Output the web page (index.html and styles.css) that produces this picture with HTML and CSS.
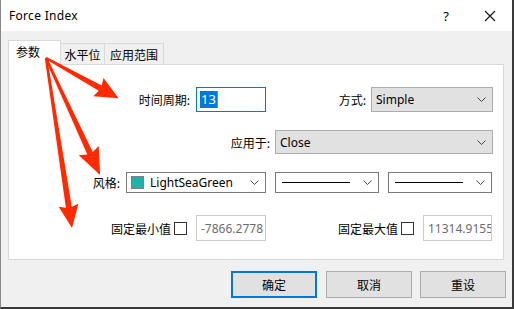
FILE: index.html
```html
<!DOCTYPE html>
<html>
<head>
<meta charset="utf-8">
<link rel="stylesheet" href="styles.css">
</head>
<body>
<div class="window">
  <div class="titlebar">
    <span class="title">Force Index</span>
    <span class="help">?</span>
    <svg class="close" width="12" height="12" viewBox="0 0 12 12"><path d="M1 1L11 11M11 1L1 11" stroke="#111" stroke-width="1.1" fill="none"/></svg>
  </div>
  <div class="content">
    <div class="tabs">
      <div class="tab active">参数</div>
      <div class="tab">水平位</div>
      <div class="tab">应用范围</div>
    </div>
    <div class="panel">
      <div class="row r1">
        <div class="cell">
          <span class="label">时间周期:</span>
          <div class="input focus"><span class="sel">13</span></div>
        </div>
        <div class="cell">
          <span class="label">方式:</span>
          <div class="select gray w122"><span>Simple</span><svg class="chev" width="9" height="5" viewBox="0 0 9 5"><path d="M0.5 0.5L4.5 4.5L8.5 0.5" stroke="#444" fill="none"/></svg></div>
        </div>
      </div>
      <div class="row r2">
        <div class="cell span">
          <span class="label">应用于:</span>
          <div class="select gray w218"><span>Close</span><svg class="chev" width="9" height="5" viewBox="0 0 9 5"><path d="M0.5 0.5L4.5 4.5L8.5 0.5" stroke="#444" fill="none"/></svg></div>
        </div>
      </div>
      <div class="row r3">
        <div class="cell">
          <span class="label">风格:</span>
          <div class="select white w140"><span class="swatch"></span><span>LightSeaGreen</span><svg class="chev" width="9" height="5" viewBox="0 0 9 5"><path d="M0.5 0.5L4.5 4.5L8.5 0.5" stroke="#444" fill="none"/></svg></div>
        </div>
        <div class="cell start">
          <div class="select white w104"><span class="line"></span><svg class="chev" width="9" height="5" viewBox="0 0 9 5"><path d="M0.5 0.5L4.5 4.5L8.5 0.5" stroke="#444" fill="none"/></svg></div>
          <div class="select white w104"><span class="line"></span><svg class="chev" width="9" height="5" viewBox="0 0 9 5"><path d="M0.5 0.5L4.5 4.5L8.5 0.5" stroke="#444" fill="none"/></svg></div>
        </div>
      </div>
      <div class="row r4">
        <div class="cell">
          <span class="label">固定最小值</span>
          <span class="check"></span>
          <div class="input disabled w70">-7866.2778</div>
        </div>
        <div class="cell">
          <span class="label">固定最大值</span>
          <span class="check"></span>
          <div class="input disabled w69">11314.9155</div>
        </div>
      </div>
    </div>
    <div class="buttons">
      <div class="btn default">确定</div>
      <div class="btn b2">取消</div>
      <div class="btn b3">重设</div>
    </div>
  </div>
  <svg class="arrows" width="514" height="309" viewBox="0 0 514 309">
    <g fill="#ff2a00">
      <polygon transform="translate(46 58) rotate(29.05)" points="0,-1.2 62,-3 60,-10.5 83,0 60,10.5 62,3 0,1.2"/>
      <polygon transform="translate(46 58) rotate(65.2)" points="0,-1.2 105,-3 102,-11 129,0 102,11 105,3 0,1.2"/>
      <polygon transform="translate(46 58) rotate(81.3)" points="0,-1.2 151,-3 149,-10 172,0 149,10 151,3 0,1.2"/>
    </g>
  </svg>
</div>
</body>
</html>
```
FILE: styles.css
```css
html, body {
  margin: 0;
  padding: 0;
  background: #ffffff;
}
body {
  font-family: "Segoe UI", "Noto Sans", "Noto Sans CJK SC", sans-serif;
  font-size: 12px;
  color: #000;
}
.window {
  position: relative;
  width: 514px;
  height: 309px;
  box-sizing: border-box;
  border-left: 1px solid #888;
  border-right: 2px solid #3a3a3a;
  border-bottom: 2px solid #3a3a3a;
  background: #f0f0f0;
  overflow: hidden;
}
.titlebar {
  height: 31px;
  background: #fff;
  display: flex;
  align-items: center;
  padding-left: 8px;
  padding-right: 16px;
}
.title {
  flex: 1;
  font-size: 12px;
  letter-spacing: 0.3px;
}
.help {
  font-size: 13px;
  margin-right: 35px;
}
.close {
  display: block;
}
.content {
  padding-top: 9px;
}
.tabs {
  display: flex;
  align-items: flex-end;
  height: 24px;
  margin-left: 7px;
  position: relative;
  z-index: 1;
}
.tab {
  box-sizing: border-box;
  height: 21px;
  border: 1px solid #d9d9d9;
  border-bottom: none;
  background: #f0f0f0;
  display: flex;
  align-items: center;
  justify-content: center;
  font-family: "Noto Sans CJK SC", sans-serif;
  font-size: 12px;
  width: 45px;
  margin-left: -1px;
}
.tab:nth-child(3) {
  width: 60px;
}
.tab.active {
  height: 25px;
  width: 53px;
  margin-left: 0;
  margin-bottom: -1px;
  background: #fff;
  justify-content: flex-start;
  padding-left: 7px;
  padding-bottom: 4px;
  z-index: 2;
}
.tab.active + .tab {
  margin-left: -1px;
}
.panel {
  box-sizing: border-box;
  margin-left: 7px;
  width: 496px;
  height: 196px;
  background: #fff;
  border: 1px solid #d9d9d9;
  padding-top: 22px;
}
.row {
  display: grid;
  grid-template-columns: 257px 218px;
  column-gap: 9px;
}
.r1 { height: 25px; }
.r2 { height: 24px; margin-top: 18px; }
.r3 { height: 21px; margin-top: 18px; }
.r4 { height: 26px; margin-top: 22px; }
.cell {
  display: flex;
  justify-content: flex-end;
  align-items: center;
}
.cell.span {
  grid-column: 1 / -1;
}
.cell.start {
  justify-content: flex-start;
  gap: 9px;
}
.label {
  font-family: "Noto Sans CJK SC", sans-serif;
  font-size: 12px;
  margin-right: 5px;
  white-space: nowrap;
}
.r1 .cell:first-child .label,
.r3 .cell:first-child .label {
  margin-right: 6px;
}
.input {
  box-sizing: border-box;
  height: 100%;
  background: #fff;
  display: flex;
  align-items: center;
  overflow: hidden;
  white-space: nowrap;
}
.input.focus {
  width: 70px;
  border: 1px solid #0078d7;
  padding-left: 3px;
}
.sel {
  background: #0078d7;
  color: #fff;
  font-size: 13px;
  line-height: 17px;
  padding: 0 1px;
  border-right: 1px solid #ff6a00;
}
.input.disabled {
  border: 1px solid #cccccc;
  color: #6d6d6d;
  padding-left: 4px;
  font-size: 12px;
}
.w70 { width: 70px; }
.w69 { width: 69px; margin-right: 1px; }
.check {
  box-sizing: border-box;
  width: 13px;
  height: 13px;
  border: 1px solid #333;
  background: #fff;
  margin-left: -2px;
  margin-right: 9px;
}
.select {
  box-sizing: border-box;
  height: 100%;
  display: flex;
  align-items: center;
  padding-left: 4px;
  padding-right: 6px;
  position: relative;
}
.select.gray {
  background: #e1e1e1;
  border: 1px solid #adadad;
}
.select.white {
  background: #fff;
  border: 1px solid #7a7a7a;
}
.select > span {
  flex: 1;
}
.chev {
  display: block;
  flex: none;
}
.w122 { width: 122px; }
.w218 { width: 218px; }
.w140 { width: 140px; }
.w104 { width: 104px; }
.swatch {
  flex: none !important;
  box-sizing: border-box;
  width: 13px;
  height: 13px;
  background: #20b2aa;
  border: 1px solid #808080;
  margin-right: 6px;
}
.line {
  height: 1px;
  background: #000;
  margin-left: 2px;
  margin-right: 13px;
}
.buttons {
  display: flex;
  justify-content: flex-end;
  padding-right: 6px;
  margin-top: 11px;
}
.btn {
  box-sizing: border-box;
  width: 86px;
  height: 27px;
  background: #e1e1e1;
  border: 1px solid #adadad;
  display: flex;
  align-items: center;
  justify-content: center;
  font-family: "Noto Sans CJK SC", sans-serif;
  font-size: 12px;
}
.btn.default {
  border: 2px solid #0078d7;
}
.b2 { margin-left: 9px; }
.b3 { margin-left: 8px; }
.arrows {
  position: absolute;
  left: -1px;
  top: 0;
  pointer-events: none;
  z-index: 5;
}
```
